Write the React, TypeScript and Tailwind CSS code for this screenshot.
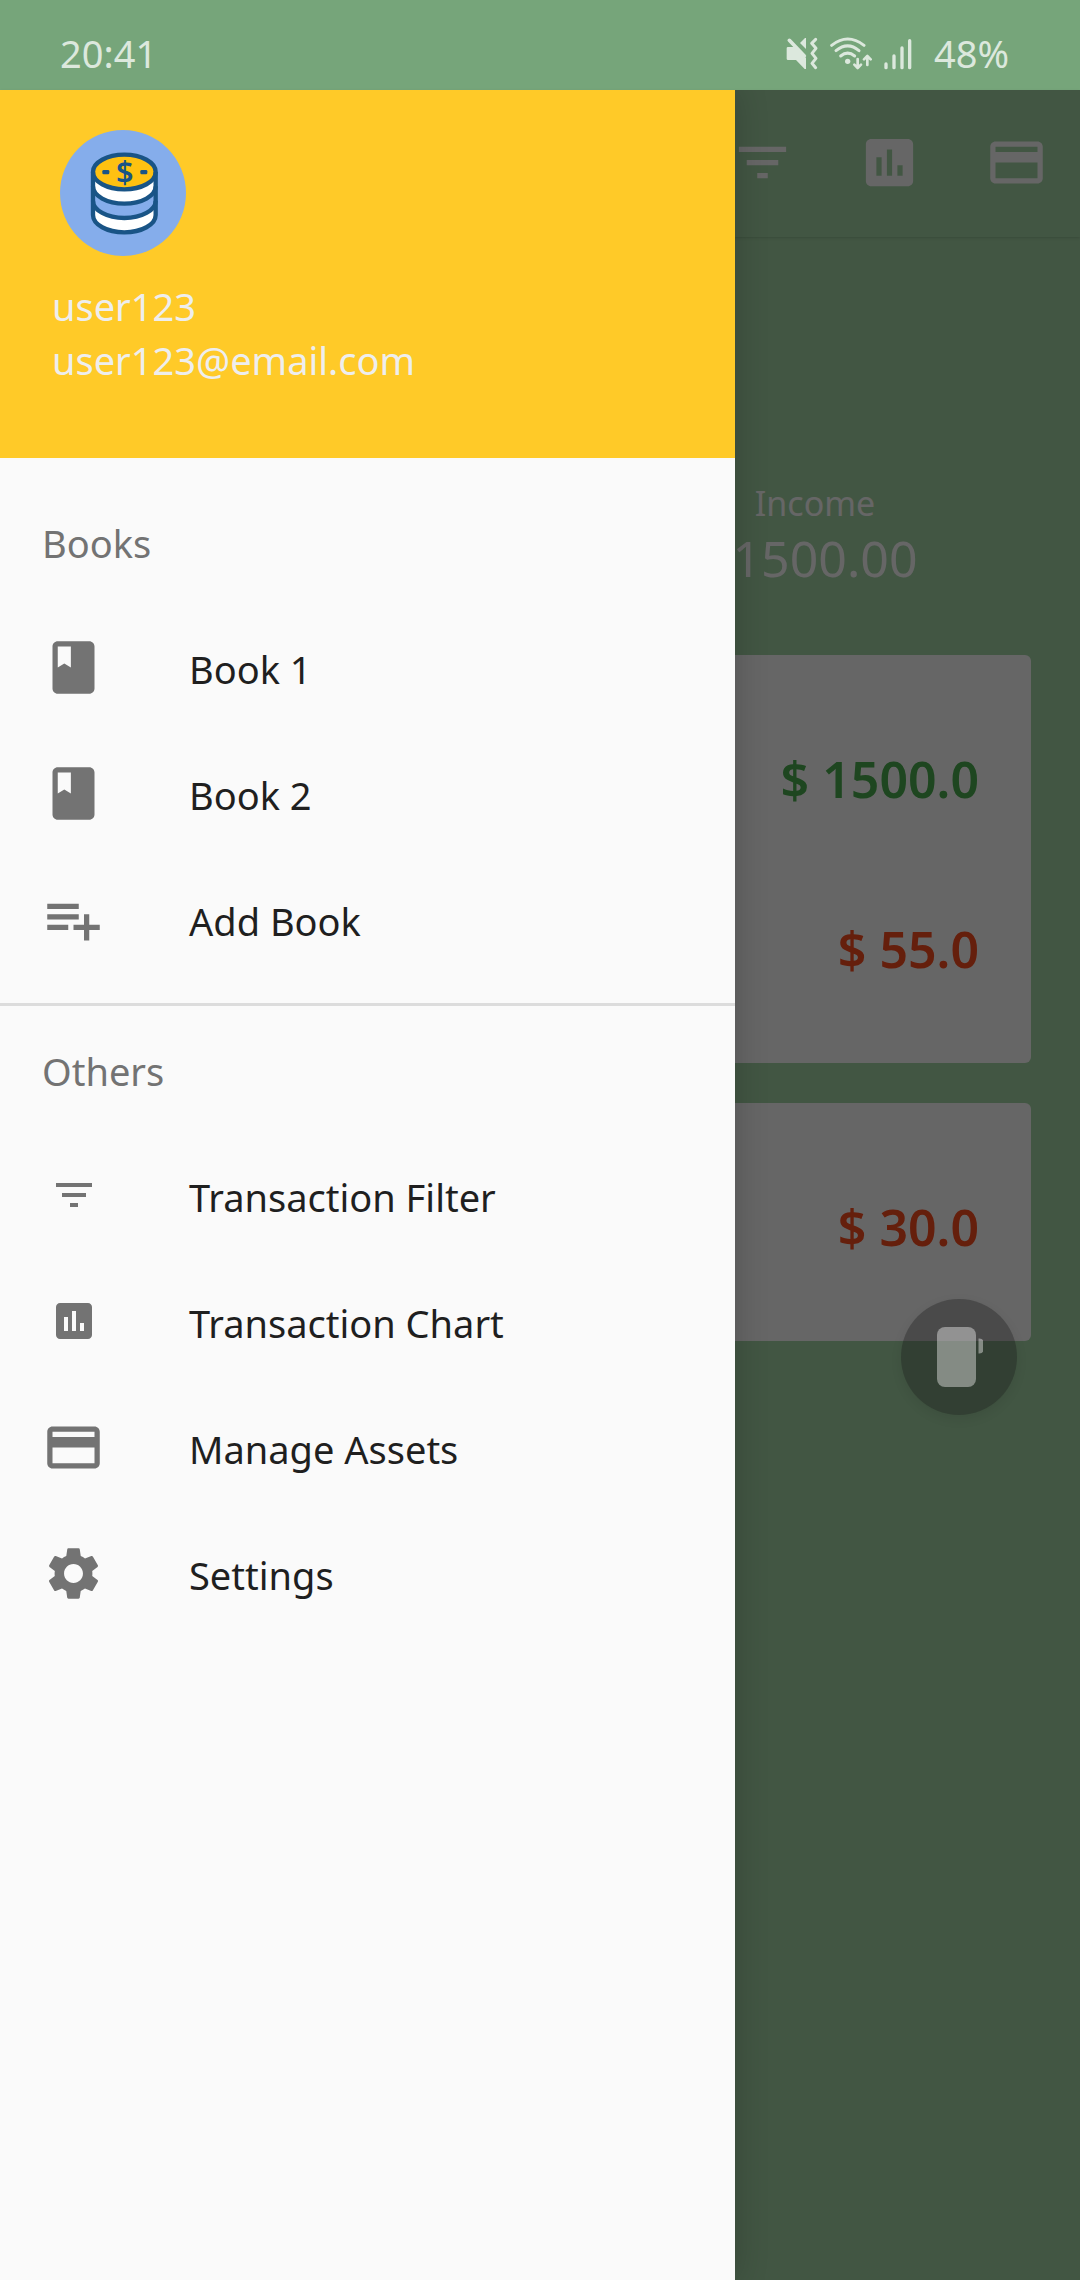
import React from "react";
import type { ReactNode } from "react";
import { MdClass, MdFilterList, MdInsertChart, MdPayment, MdSettings } from "react-icons/md";

function MutedVibrateIcon() {
  return (
    <svg className="h-[33px] w-8" viewBox="198 108 96 99" aria-hidden="true">
      <g fill="currentColor">
        <path d="M204 138h22l32 33v33h-4l-26-27h-24q-4 0-4-4v-31q0-4 4-4z" />
        <path d="M240 126l15-15h3v33z" />
      </g>
      <g fill="none" stroke="currentColor" strokeLinecap="round" strokeLinejoin="round">
        <path d="M208 118l45 47" strokeWidth="11" />
        <path d="M287 115l-12 12 13 15-12 15 12 15-12 15 11 13" strokeWidth="9" />
      </g>
    </svg>
  );
}

function WifiIcon() {
  return (
    <svg className="h-[33px] w-[42px]" viewBox="329 108 126 99" aria-hidden="true">
      <circle cx="382" cy="181" r="8" fill="currentColor" />
      <g fill="none" stroke="currentColor" strokeWidth="9" strokeLinecap="round" strokeLinejoin="round">
        <path d="M334 133Q382 95 431 133" />
        <path d="M347 149Q382 120 416 149" />
        <path d="M361 165Q382 148 403 165" />
        <path d="M412 174v26M402 191l10 10 10-10" strokeWidth="8" />
        <path d="M441 192v-26M431 175l10-10 10 10" strokeWidth="8" />
      </g>
    </svg>
  );
}

function SignalIcon() {
  return (
    <svg className="h-[33px] w-7" viewBox="488 108 84 99" aria-hidden="true">
      <path d="M494 189v11M518 165v35M542 141v59M565 119v81" stroke="currentColor" strokeWidth="10" strokeLinecap="round" />
    </svg>
  );
}

function PlaylistAddIcon({ className }: { className?: string }) {
  return (
    <svg className={className} viewBox="0 0 24 24" fill="currentColor" aria-hidden="true">
      <path d="M14 10H2v2h12v-2zm0-4H2v2h12V6zm4 8v-4h-2v4h-4v2h4v4h2v-4h4v-2h-4zM2 16h8v-2H2v2z" />
    </svg>
  );
}

function CoinsAvatar() {
  return (
    <svg className="ml-2 size-[126px]" viewBox="60 60 378 378" role="img" aria-label="Profile picture">
      <circle cx="249" cy="249" r="189" fill="#85adeb" />
      <path d="M159 186v129a94 52 0 0 0 188 0V186z" fill="#fff" />
      <path d="M159 229a94 52 0 0 0 188 0v43a94 52 0 0 1-188 0z" fill="#85adeb" />
      <ellipse cx="253" cy="186" rx="94" ry="52" fill="#fec111" />
      <g fill="none" stroke="#195486" strokeWidth="13">
        <ellipse cx="253" cy="186" rx="94" ry="52" />
        <path d="M159 229a94 52 0 0 0 188 0M159 272a94 52 0 0 0 188 0" />
        <path d="M159 186v129a94 52 0 0 0 188 0V186" />
      </g>
      <g fill="#195486">
        <rect x="187" y="180" width="21" height="13" rx="4" />
        <rect x="301" y="180" width="21" height="13" rx="4" />
        <text x="254" y="219" textAnchor="middle" fontSize="92" fontWeight="600">$</text>
      </g>
    </svg>
  );
}

function ToolbarButton({ label, children }: { label: string; children: ReactNode }) {
  return (
    <button type="button" aria-label={label} className="flex w-[127px] items-center justify-center text-white">
      {children}
    </button>
  );
}

function TransactionCard({ amounts }: { amounts: { text: string; income?: boolean }[] }) {
  return (
    <ul className="rounded-md bg-white py-[34px] pr-[52px] text-[50px] leading-[60px] font-semibold">
      {amounts.map(({ text, income }) => (
        <li
          key={text}
          className={
            income
              ? "flex h-[170px] items-center justify-end pt-2.5 text-[#4caf50]"
              : "flex h-[170px] items-center justify-end pt-2.5 text-[#fc4e20]"
          }
        >
          {text}
        </li>
      ))}
    </ul>
  );
}

function DrawerHeading({ children }: { children: ReactNode }) {
  return (
    <h2 className="flex h-[126px] items-center px-[42px] pt-1 text-[38px] leading-[54px] text-[#737373]">
      {children}
    </h2>
  );
}

function DrawerItem({ icon, label }: { icon: ReactNode; label: string }) {
  return (
    <li>
      <button type="button" className="flex h-[126px] w-full items-center gap-[84px] px-[42px] text-left">
        <span className="flex size-[63px] items-center justify-center text-[#737373]">{icon}</span>
        <span className="pt-1 text-[38px] leading-[54px] text-[#1f1f1f]">{label}</span>
      </button>
    </li>
  );
}

export default function App() {
  return (
    <div className="flex min-h-screen flex-col bg-[#a5d6a7] font-['Noto_Sans',sans-serif]">
      <header className="flex h-[90px] items-center bg-[#76a57a] pt-4 pr-[71px] pl-[60px] text-[38px] leading-[54px] text-[#dce8dd]">
        <time>20:41</time>
        <div className="ml-auto flex items-center gap-3">
          <MutedVibrateIcon />
          <WifiIcon />
          <SignalIcon />
          <span className="ml-2.5">48%</span>
        </div>
      </header>

      <div className="relative flex-1">
        <main>
          <nav className="flex h-[147px] justify-end pb-0.5 shadow-sm" aria-label="Toolbar">
            <ToolbarButton label="Filter">
              <MdFilterList className="size-[63px]" />
            </ToolbarButton>
            <ToolbarButton label="Chart">
              <MdInsertChart className="size-[63px]" />
            </ToolbarButton>
            <ToolbarButton label="Assets">
              <MdPayment className="size-[63px]" />
            </ToolbarButton>
          </nav>

          <section className="grid grid-cols-2 pt-[241px] pb-[67px] pl-5 text-center text-white">
            <div className="col-start-2">
              <p className="text-[34px] leading-[50px]">Income</p>
              <p className="pl-5 text-[50px] leading-[60px]">1500.00</p>
            </div>
          </section>

          <div className="flex flex-col gap-10 px-[49px]">
            <TransactionCard amounts={[{ text: "$ 1500.0", income: true }, { text: "$ 55.0" }]} />
            <TransactionCard amounts={[{ text: "$ 30.0" }]} />
          </div>
        </main>

        <div className="absolute inset-0 bg-black/60" />

        <div className="absolute inset-0 overflow-hidden">
          <aside className="h-full w-[735px] max-w-[85%] bg-[#fafafa] shadow-[0_0_32px_rgba(0,0,0,0.2)]">
            <div className="bg-[#ffca28] px-[52px] pt-10 pb-[71px] text-[38px] leading-[54px] text-[#eeeeee]">
              <CoinsAvatar />
              <p className="mt-[23px]">user123</p>
              <p>user123@email.com</p>
            </div>

            <nav className="pt-5" aria-label="Drawer">
              <DrawerHeading>Books</DrawerHeading>
              <ul>
                <DrawerItem icon={<MdClass className="size-[63px]" />} label="Book 1" />
                <DrawerItem icon={<MdClass className="size-[63px]" />} label="Book 2" />
                <DrawerItem icon={<PlaylistAddIcon className="size-[63px]" />} label="Add Book" />
              </ul>
              <hr className="mt-[21px] border-t-[3px] border-[#dcdcdc]" />
              <DrawerHeading>Others</DrawerHeading>
              <ul>
                <DrawerItem icon={<MdFilterList className="size-12" />} label="Transaction Filter" />
                <DrawerItem icon={<MdInsertChart className="size-12" />} label="Transaction Chart" />
                <DrawerItem icon={<MdPayment className="size-[63px]" />} label="Manage Assets" />
                <DrawerItem icon={<MdSettings className="size-[63px]" />} label="Settings" />
              </ul>
            </nav>
          </aside>
        </div>

        <button
          type="button"
          aria-label="Battery"
          className="absolute top-[1209px] right-[63px] flex size-[116px] items-center justify-center rounded-full bg-[rgba(20,20,20,0.34)] shadow-[0_4px_12px_rgba(0,0,0,0.08)]"
        >
          <svg className="h-[60px] w-12" viewBox="0 0 48 60" fill="#fff" fillOpacity="0.4" aria-hidden="true">
            <rect x="2" width="39" height="60" rx="8" />
            <path d="M43.5 11.5h1q4 0 4 4v7q0 4-4 4h-1z" />
          </svg>
        </button>
      </div>
    </div>
  );
}
